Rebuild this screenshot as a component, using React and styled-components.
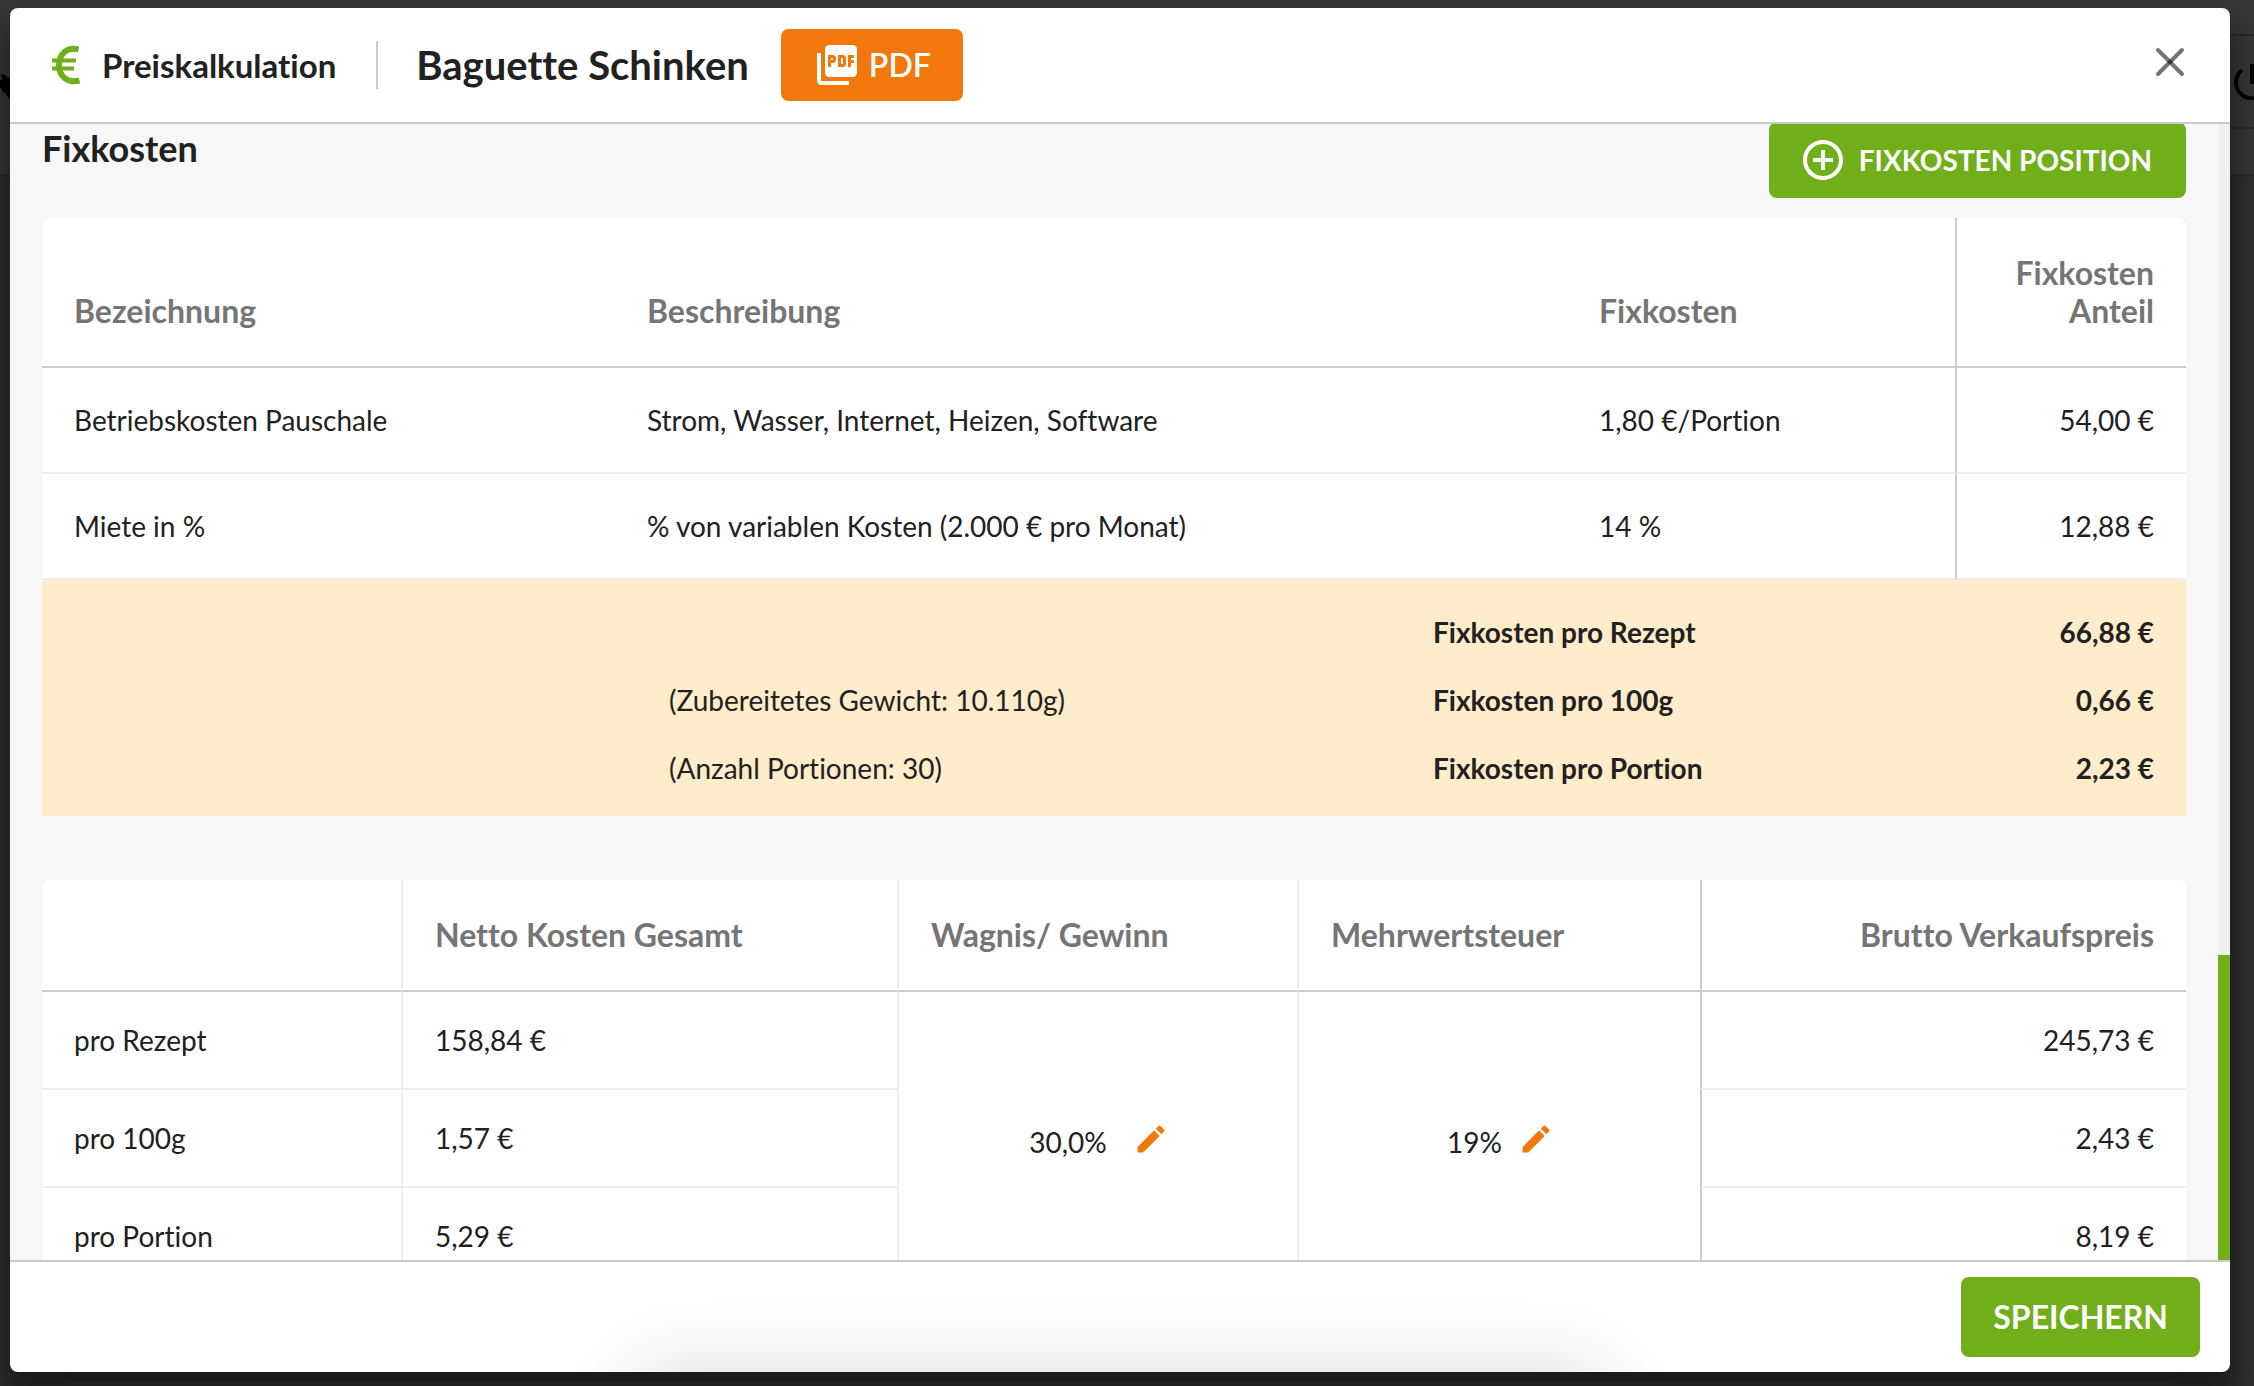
import React from "react";
import styled, { createGlobalStyle } from "styled-components";
import { MdPictureAsPdf, MdControlPoint, MdEdit } from "react-icons/md";

const color = {
  text: "#212121",
  muted: "#757575",
  line: "#cbcbcb",
  lineSoft: "#eeeeee",
  surface: "#f7f7f7",
  green: "#70ae1a",
  orange: "#f3780b",
  sum: "#feecca",
};

const GlobalStyle = createGlobalStyle`
  *, *::before, *::after { box-sizing: border-box; }
  html, body, #root { height: 100%; }
  body {
    margin: 0;
    overflow: hidden;
    background: #373737;
    color: ${color.text};
    font-family: Lato, "Open Sans", sans-serif;
    font-size: 28px;
    line-height: 32px;
    font-variant-ligatures: none;
  }
`;

const Page = styled.div`
  position: relative;
  height: 100%;
  padding: 8px 24px 14px 10px;
  background: #373737;
`;

const Backdrop = styled.svg`
  position: absolute;
  inset: 0;
  width: 100%;
  height: 100%;
`;

const BackdropIcon = styled.svg`
  position: absolute;
  top: 64px;
  right: -16px;
  width: 36px;
  height: 36px;
`;

const BackdropPanel = styled.div`
  position: absolute;
  right: 52px;
  bottom: -8px;
  left: 54px;
  height: 40px;
  border: 2px solid #191919;
  border-radius: 8px;
`;

const Shadow = styled.div`
  position: relative;
  height: 100%;
  border-radius: 8px;
  box-shadow: 0 22px 30px 6px rgba(0, 0, 0, 0.45);
`;

const Dialog = styled.section`
  position: relative;
  display: flex;
  flex-direction: column;
  height: 100%;
  border-radius: 8px;
  background: #fff;
  overflow: hidden;
`;

const Header = styled.header`
  display: flex;
  flex: none;
  align-items: center;
  justify-content: space-between;
  height: 116px;
  padding: 0 44px 0 40px;
  border-bottom: 2px solid ${color.line};
`;

const HeaderGroup = styled.div`
  display: flex;
  align-items: center;
`;

const Section = styled.div`
  display: flex;
  align-items: center;
  gap: 20px;
  height: 48px;
  padding-right: 40px;
  border-right: 2px solid ${color.line};
  font-size: 33px;
  line-height: 38px;
  font-weight: 700;
  svg { display: block; color: ${color.green}; }
`;

const Title = styled.h1`
  margin: 0;
  padding: 0 32px 0 38px;
  font-size: 40px;
  line-height: 48px;
  font-weight: 700;
`;

const Button = styled.button`
  display: flex;
  align-items: center;
  justify-content: center;
  gap: ${(p) => p.$gap || 8}px;
  height: ${(p) => p.$height}px;
  padding: 0 32px;
  border: 0;
  border-radius: 8px;
  background: ${(p) => p.$tone};
  color: #fff;
  font: ${(p) => p.$weight || 700} ${(p) => p.$size || 32}px / 38px Lato, "Open Sans", sans-serif;
  font-variant-ligatures: none;
  white-space: nowrap;
  cursor: pointer;
`;

const AddButton = styled(Button)`
  padding: 0 34px 0 30px;
`;

const IconButton = styled.button`
  display: flex;
  align-items: center;
  justify-content: center;
  height: 38px;
  padding: 0;
  border: 0;
  background: none;
  color: ${color.orange};
  cursor: pointer;
`;

const CloseButton = styled(IconButton)`
  align-self: flex-start;
  margin-top: 35px;
`;

const Body = styled.div`
  display: flex;
  flex: 1;
  min-height: 0;
  background: ${color.surface};
`;

const Content = styled.main`
  flex: 1;
  min-width: 0;
  overflow: hidden;
  padding: 0 32px;
`;

const Scrollbar = styled.div`
  display: flex;
  flex-direction: column;
  justify-content: flex-end;
  width: 12px;
  background: #f0f0f0;
`;

const Thumb = styled.div`
  height: 305px;
  background: ${color.green};
`;

const SectionHead = styled.div`
  display: flex;
  align-items: flex-start;
  justify-content: space-between;
  margin: -2px 0 20px;
`;

const SectionTitle = styled.h2`
  margin: 4px 0 0;
  font-size: 36px;
  line-height: 44px;
  font-weight: 700;
`;

const Table = styled.table`
  width: 100%;
  table-layout: fixed;
  border-collapse: separate;
  border-spacing: 0;
  border-radius: 8px 8px 0 0;
  background: #fff;
`;

const Col = styled.col`
  width: ${(p) => (p.$width ? `${p.$width}px` : "auto")};
`;

const rule = (kind) =>
  kind === "strong" ? `2px solid ${color.line}` : kind === "soft" ? `2px solid ${color.lineSoft}` : "0";

const HeadCell = styled.th`
  padding: 36px 32px;
  border-bottom: 2px solid ${color.line};
  border-left: ${(p) => rule(p.$rule)};
  color: ${color.muted};
  font-size: 32px;
  line-height: 38px;
  font-weight: 700;
  text-align: ${(p) => (p.$right ? "right" : "left")};
  vertical-align: bottom;
`;

const Cell = styled.td`
  padding: ${(p) => p.$pad || 36}px 32px;
  border-bottom: 2px solid ${color.lineSoft};
  border-left: ${(p) => rule(p.$rule)};
  text-align: ${(p) => (p.$right ? "right" : "left")};
`;

const SumBox = styled.div`
  padding-bottom: 32px;
  margin-bottom: 64px;
  background: ${color.sum};
`;

const SumTable = styled(Table)`
  background: none;
`;

const SumCell = styled.td`
  padding: 36px 32px 0;
  font-weight: ${(p) => (p.$bold ? 700 : 400)};
  text-align: ${(p) => (p.$right ? "right" : "left")};
`;

const Rate = styled.div`
  display: flex;
  align-items: flex-end;
  justify-content: center;
  gap: ${(p) => p.$gap}px;
  padding: 2px 0 0 2px;
`;

const Footer = styled.footer`
  position: relative;
  display: flex;
  flex: none;
  align-items: center;
  justify-content: flex-end;
  height: 112px;
  padding: 0 30px;
  border-top: 2px solid ${color.line};

  &::after {
    content: "";
    position: absolute;
    top: 100%;
    right: 28%;
    left: 28%;
    height: 80px;
    border-radius: 40px;
    box-shadow: 0 0 72px 4px rgba(0, 0, 0, 0.14);
  }
`;

const costs = [
  ["Betriebskosten Pauschale", "Strom, Wasser, Internet, Heizen, Software", "1,80 €/Portion", "54,00 €"],
  ["Miete in %", "% von variablen Kosten (2.000 € pro Monat)", "14 %", "12,88 €"],
];

const sums = [
  ["", "Fixkosten pro Rezept", "66,88 €"],
  ["(Zubereitetes Gewicht: 10.110g)", "Fixkosten pro 100g", "0,66 €"],
  ["(Anzahl Portionen: 30)", "Fixkosten pro Portion", "2,23 €"],
];

const prices = [
  ["pro Rezept", "158,84 €", "245,73 €"],
  ["pro 100g", "1,57 €", "2,43 €"],
  ["pro Portion", "5,29 €", "8,19 €"],
];

function EuroIcon() {
  return (
    <svg width="32" height="40" viewBox="0 0 32 40" fill="none" stroke="currentColor" aria-hidden="true">
      <path d="M28.5 4.5C17 1.5 9 9 9 20S17 38.5 29.5 35.5" strokeWidth="6" />
      <path d="M2 15.5H26M2 23.5H24" strokeWidth="4" />
    </svg>
  );
}

function CloseIcon() {
  return (
    <svg width="32" height="32" viewBox="0 0 32 32" stroke="#000" strokeOpacity="0.54" strokeWidth="4" strokeLinecap="round">
      <line x1="4" y1="4" x2="28" y2="28" />
      <line x1="28" y1="4" x2="4" y2="28" />
    </svg>
  );
}

export default function App() {
  return (
    <Page>
      <GlobalStyle />
      <Backdrop aria-hidden="true">
        <rect x="0" y="175" width="100%" height="100%" fill="#303030" />
        <path d="M0 175.5H2254M2230 35H2254M2230 128H2254" stroke="#2a2a2a" strokeWidth="2" />
        <path d="M0 80V88M2 78C6 76 6 88 2 90M12 80C6 84 8 94 12 96" fill="none" stroke="#000" strokeWidth="7" />
      </Backdrop>
      <BackdropIcon viewBox="0 0 36 36" fill="none" stroke="#000" strokeWidth="4" aria-hidden="true">
        <path d="M18 0V20M8 6A16 16 0 1 0 28 6" />
      </BackdropIcon>
      <Shadow>
        <BackdropPanel aria-hidden="true" />
        <Dialog role="dialog" aria-label="Preiskalkulation">
          <Header>
            <HeaderGroup>
              <Section>
                <EuroIcon />
                Preiskalkulation
              </Section>
              <Title>Baguette Schinken</Title>
              <Button $tone={color.orange} $height={72} $weight={600}>
                <MdPictureAsPdf size={48} />
                PDF
              </Button>
            </HeaderGroup>
            <CloseButton aria-label="Schließen">
              <CloseIcon />
            </CloseButton>
          </Header>
          <Body>
            <Content>
              <SectionHead>
                <SectionTitle>Fixkosten</SectionTitle>
                <AddButton $tone={color.green} $height={76} $size={28} $gap={12}>
                  <MdControlPoint size={48} />
                  FIXKOSTEN POSITION
                </AddButton>
              </SectionHead>
              <Table>
                <colgroup>
                  <Col $width={573} />
                  <Col />
                  <Col $width={388} />
                  <Col $width={231} />
                </colgroup>
                <thead>
                  <tr>
                    <HeadCell>Bezeichnung</HeadCell>
                    <HeadCell>Beschreibung</HeadCell>
                    <HeadCell>Fixkosten</HeadCell>
                    <HeadCell $right $rule="strong">Fixkosten Anteil</HeadCell>
                  </tr>
                </thead>
                <tbody>
                  {costs.map(([name, text, cost, share]) => (
                    <tr key={name}>
                      <Cell>{name}</Cell>
                      <Cell>{text}</Cell>
                      <Cell>{cost}</Cell>
                      <Cell $right $rule="strong">{share}</Cell>
                    </tr>
                  ))}
                </tbody>
              </Table>
              <SumBox>
                <SumTable>
                  <colgroup>
                    <Col $width={595} />
                    <Col />
                    <Col $width={554} />
                    <Col $width={231} />
                  </colgroup>
                  <tbody>
                    {sums.map(([note, label, value]) => (
                      <tr key={label}>
                        <SumCell />
                        <SumCell>{note}</SumCell>
                        <SumCell $bold>{label}</SumCell>
                        <SumCell $bold $right>{value}</SumCell>
                      </tr>
                    ))}
                  </tbody>
                </SumTable>
              </SumBox>
              <Table>
                <colgroup>
                  <Col $width={359} />
                  <Col $width={496} />
                  <Col $width={400} />
                  <Col $width={403} />
                  <Col />
                </colgroup>
                <thead>
                  <tr>
                    <HeadCell />
                    <HeadCell $rule="soft">Netto Kosten Gesamt</HeadCell>
                    <HeadCell $rule="soft">Wagnis/ Gewinn</HeadCell>
                    <HeadCell $rule="soft">Mehrwertsteuer</HeadCell>
                    <HeadCell $right $rule="strong">Brutto Verkaufspreis</HeadCell>
                  </tr>
                </thead>
                <tbody>
                  {prices.map(([label, net, gross], i) => (
                    <tr key={label}>
                      <Cell $pad={32}>{label}</Cell>
                      <Cell $pad={32} $rule="soft">{net}</Cell>
                      {i === 0 && (
                        <>
                          <Cell $rule="soft" rowSpan={3}>
                            <Rate $gap={26}>
                              30,0%
                              <IconButton aria-label="Wagnis/ Gewinn bearbeiten"><MdEdit size={36} /></IconButton>
                            </Rate>
                          </Cell>
                          <Cell $rule="soft" rowSpan={3}>
                            <Rate $gap={16}>
                              19%
                              <IconButton aria-label="Mehrwertsteuer bearbeiten"><MdEdit size={36} /></IconButton>
                            </Rate>
                          </Cell>
                        </>
                      )}
                      <Cell $pad={32} $right $rule="strong">{gross}</Cell>
                    </tr>
                  ))}
                </tbody>
              </Table>
            </Content>
            <Scrollbar>
              <Thumb />
            </Scrollbar>
          </Body>
          <Footer>
            <Button $tone={color.green} $height={80}>SPEICHERN</Button>
          </Footer>
        </Dialog>
      </Shadow>
    </Page>
  );
}
